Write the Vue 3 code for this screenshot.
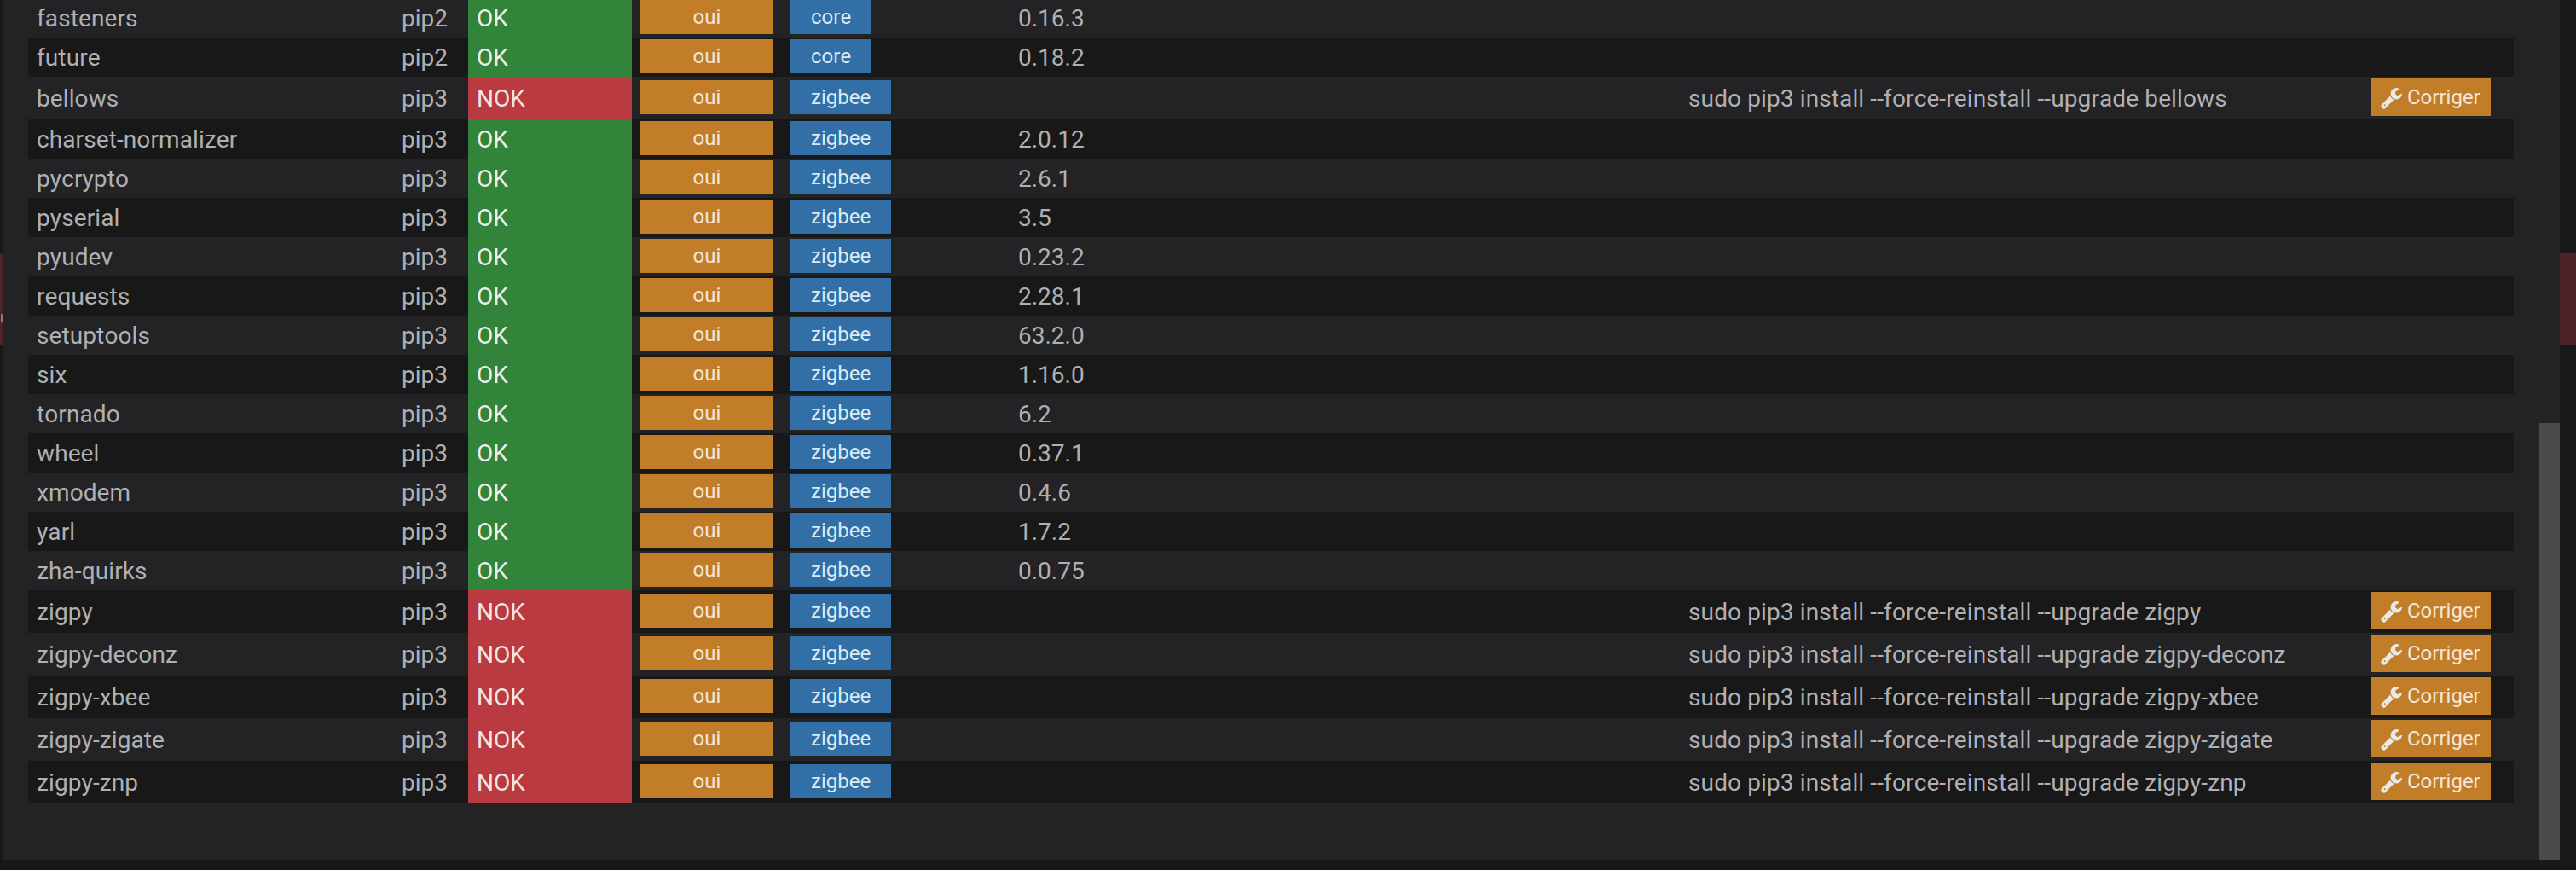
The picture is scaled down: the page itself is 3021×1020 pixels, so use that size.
<script setup>
const rows = [
  ['fasteners', 'pip2', 'core', '0.16.3'],
  ['future', 'pip2', 'core', '0.18.2'],
  ['bellows', 'pip3', 'zigbee', ''],
  ['charset-normalizer', 'pip3', 'zigbee', '2.0.12'],
  ['pycrypto', 'pip3', 'zigbee', '2.6.1'],
  ['pyserial', 'pip3', 'zigbee', '3.5'],
  ['pyudev', 'pip3', 'zigbee', '0.23.2'],
  ['requests', 'pip3', 'zigbee', '2.28.1'],
  ['setuptools', 'pip3', 'zigbee', '63.2.0'],
  ['six', 'pip3', 'zigbee', '1.16.0'],
  ['tornado', 'pip3', 'zigbee', '6.2'],
  ['wheel', 'pip3', 'zigbee', '0.37.1'],
  ['xmodem', 'pip3', 'zigbee', '0.4.6'],
  ['yarl', 'pip3', 'zigbee', '1.7.2'],
  ['zha-quirks', 'pip3', 'zigbee', '0.0.75'],
  ['zigpy', 'pip3', 'zigbee', ''],
  ['zigpy-deconz', 'pip3', 'zigbee', ''],
  ['zigpy-xbee', 'pip3', 'zigbee', ''],
  ['zigpy-zigate', 'pip3', 'zigbee', ''],
  ['zigpy-znp', 'pip3', 'zigbee', ''],
].map(([name, source, plugin, version]) => ({ name, source, plugin, version, ok: version !== '' }))
</script>

<template>
  <div class="page">
    <span class="edge edge-left"><i class="edge-arrow"></i></span>
    <span class="edge edge-right"></span>
    <main class="panel">
      <table class="deps">
        <colgroup>
          <col class="c-name" /><col class="c-source" /><col class="c-status" /><col class="c-required" />
          <col class="c-plugin" /><col class="c-version" /><col class="c-command" /><col class="c-action" />
        </colgroup>
        <tbody>
          <tr v-for="row in rows" :key="row.name" :class="{ nok: !row.ok }">
            <td class="name">{{ row.name }}</td>
            <td class="source">{{ row.source }}</td>
            <td class="status" :class="row.ok ? 'is-ok' : 'is-nok'">{{ row.ok ? 'OK' : 'NOK' }}</td>
            <td class="tag"><span class="label required">oui</span></td>
            <td class="tag"><span class="label plugin">{{ row.plugin }}</span></td>
            <td class="version">{{ row.version }}</td>
            <td class="command">{{ row.ok ? '' : 'sudo pip3 install --force-reinstall --upgrade ' + row.name }}</td>
            <td class="action">
              <button v-if="!row.ok" class="fix" type="button">
                <svg class="wrench" viewBox="0 0 1792 1792" aria-hidden="true">
                  <path fill="currentColor" d="M448 1472q0-26-19-45t-45-19-45 19-19 45 19 45 45 19 45-19 19-45zm644-420l-682 682q-37 37-90 37-52 0-91-37l-106-108q-38-36-38-90 0-53 38-91l681-681q39 98 114.5 173.5t173.5 114.5zm634-435q0 39-23 106-47 134-164.5 217.5t-258.5 83.5q-185 0-316.5-131.5t-131.5-316.5 131.5-316.5 316.5-131.5q58 0 121.5 16.5t107.5 46.5q16 11 16 28t-16 28l-293 169v224l193 107q5-3 79-48.5t135.5-81 70.5-35.5q15 0 23.5 10t8.5 25z" />
                </svg>
                <span>Corriger</span>
              </button>
            </td>
          </tr>
        </tbody>
      </table>
      <div class="scrollbar"></div>
    </main>
  </div>
</template>

<style>
html, body { margin: 0; background: #171818; }
</style>

<style scoped>
.page {
  position: relative;
  width: 3021px;
  height: 1020px;
  overflow: hidden;
  background: #171818;
  font-family: Roboto, "Liberation Sans", sans-serif;
}
.panel {
  position: relative;
  margin-left: 3px;
  width: 2999px;
  height: 1008px;
  overflow: hidden;
  background: #232326;
}
.deps {
  table-layout: fixed;
  border-collapse: collapse;
  width: 2915px;
  margin: -2px 0 0 30px;
  font-size: 28px;
  font-kerning: none;
  color: #b0b0b2;
}
.c-name { width: 428px; }
.c-source { width: 88px; }
.c-status { width: 192px; }
.c-required { width: 176px; }
.c-plugin { width: 268px; }
.c-version { width: 785px; }
.c-command { width: 800px; }
.c-action { width: 178px; }
tr { height: 46px; }
tr.nok { height: 50px; }
tr:nth-child(even) { background: #181818; }
td {
  padding: 0 0 0 10px;
  vertical-align: middle;
  white-space: nowrap;
  overflow: hidden;
}
td.name { padding-left: 10px; letter-spacing: 0.1px; }
td.command { letter-spacing: 0.12px; }
td.version { padding-left: 9px; }
td.status { color: #ecf0ec; }
td.is-ok { background: #32843b; }
td.is-nok { background: #b93a40; color: #f2e6e6; }
td.tag { vertical-align: top; padding-top: 2px; padding-bottom: 4px; }
tr.nok td.tag { padding-top: 4px; padding-bottom: 6px; }
.label {
  display: block;
  height: 40px;
  line-height: 40px;
  font-size: 24px;
  text-align: center;
  box-sizing: border-box;
}
.required { width: 156px; background: #c27d29; color: #f3e6d6; }
.plugin { display: inline-block; padding: 0 24px; background: #316fa6; color: #dfe9f2; vertical-align: top; }
td.action { vertical-align: top; padding: 2px 0 4px 11px; }
.fix {
  display: flex;
  align-items: center;
  gap: 5px;
  width: 140px;
  height: 44px;
  padding: 0 0 0 10px;
  border: 0;
  background: #c27d29;
  color: #f3e6d6;
  font: inherit;
  font-size: 24px;
}
.wrench { width: 27px; height: 27px; color: #ebe9e6; flex: none; }
.scrollbar {
  position: absolute;
  right: 0;
  top: 496px;
  bottom: 0;
  width: 24px;
  background: #4a4b4d;
}
.edge { position: absolute; top: 297px; height: 107px; background: #4e2327; }
.edge-left { left: 0; width: 3px; }
.edge-right { right: 0; width: 19px; }
.edge-arrow {
  position: absolute;
  left: 1px;
  top: 71px;
  width: 2px;
  height: 10px;
  background: #8a7a7c;
}
</style>
